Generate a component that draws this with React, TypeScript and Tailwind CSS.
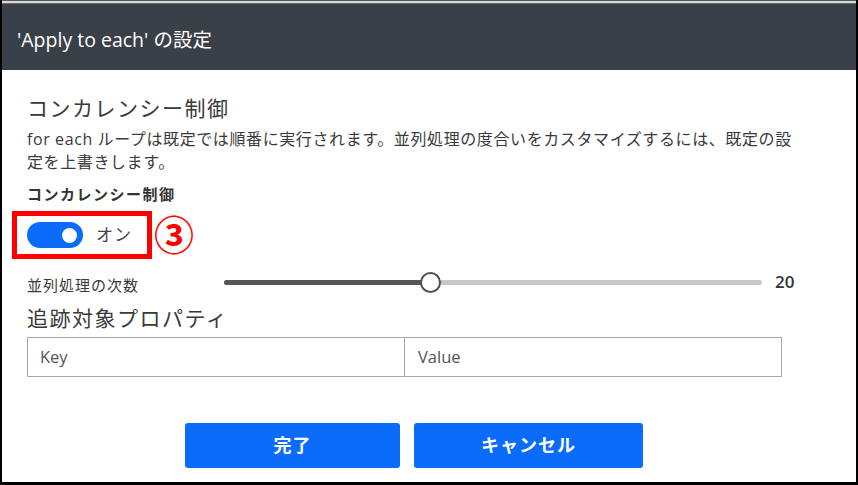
import React from "react";

const FONT = { fontFamily: '"Open Sans", "Noto Sans CJK JP", sans-serif' };

export default function App() {
  return (
    <div
      className="w-[858px] h-[485px] flex flex-col bg-white border-l-2 border-r-2 border-b-[3px] border-black overflow-hidden"
      style={FONT}
    >
      <div className="h-[1px] bg-[#5a5a5a]" />
      <div className="h-[2px] bg-[#d9d9d9]" />
      <div className="h-[1px] bg-[#6a6a6a]" />
      <div className="h-[66px] bg-[#3a4047] flex items-center pl-[15px] pt-[6px]">
        <span className="text-[19.5px] text-white leading-[26px]">'Apply to each' の設定</span>
      </div>
      <div className="h-[412px] bg-white pl-[25px] pt-[24px] flex flex-col text-[#333333]">
        <div className="text-[21px] leading-[28px] tracking-[1.5px] text-[#3a3a3a]">コンカレンシー制御</div>
        <div className="mt-[6px] text-[16px] leading-[23px] tracking-[0.6px] text-[#3a3a3a]">
          for each ループは既定では順番に実行されます。並列処理の度合いをカスタマイズするには、既定の設
          <br />
          定を上書きします。
        </div>
        <div className="mt-[9px] text-[15px] leading-[23px] font-bold tracking-[1.5px] text-[#333333]">
          コンカレンシー制御
        </div>
        <div className="mt-[5px] h-[48px] flex items-center relative">
          <div className="absolute left-[-15px] top-0 w-[140px] h-[48px] border-[5px] border-[#ff0000]" />
          <div className="w-[56px] h-[26px] rounded-full bg-[#0b6cfb] flex items-center justify-end pr-[6px]">
            <div className="w-[15px] h-[15px] rounded-full bg-white" />
          </div>
          <span className="ml-[13px] text-[17px] leading-[24px] text-[#444444] tracking-[1px]">オン</span>
          <span className="ml-[22px] text-[40px] leading-[40px] font-bold text-[#ff0000]">③</span>
        </div>
        <div className="mt-[8px] h-[30px] flex items-center">
          <div className="w-[197px] pt-[6px] text-[15px] leading-[22px] tracking-[1px] text-[#3a3a3a]">並列処理の次数</div>
          <div className="relative w-[538px] h-[5px] rounded-full bg-[#c8c8c8]">
            <div className="absolute left-0 top-0 h-[5px] w-[206px] rounded-full bg-[#555555]" />
            <div className="absolute left-[196px] top-[-8px] w-[21px] h-[21px] rounded-full bg-white border-2 border-[#505050]" />
          </div>
          <span className="ml-[13px] text-[17px] font-semibold text-[#333333] leading-[22px]">20</span>
        </div>
        <div className="mt-[7px] text-[21px] leading-[28px] tracking-[1.5px] text-[#3a3a3a]">追跡対象プロパティ</div>
        <div className="mt-[5px] flex">
          <div className="w-[378px] h-[40px] border border-[#a8a8a8] flex items-center pl-[12px] text-[16.5px] text-[#555555]">
            Key
          </div>
          <div className="w-[377px] h-[40px] border border-l-0 border-[#a8a8a8] flex items-center pl-[13px] text-[16.5px] text-[#555555]">
            Value
          </div>
        </div>
        <div className="mt-[46px] ml-[158px] flex gap-[14px]">
          <button className="w-[215px] h-[45px] rounded-[3px] bg-[#0b6cfb] text-white text-[18px] font-bold tracking-[1px]">
            完了
          </button>
          <button className="w-[229px] h-[45px] rounded-[3px] bg-[#0b6cfb] text-white text-[18px] font-bold tracking-[1px]">
            キャンセル
          </button>
        </div>
      </div>
    </div>
  );
}
